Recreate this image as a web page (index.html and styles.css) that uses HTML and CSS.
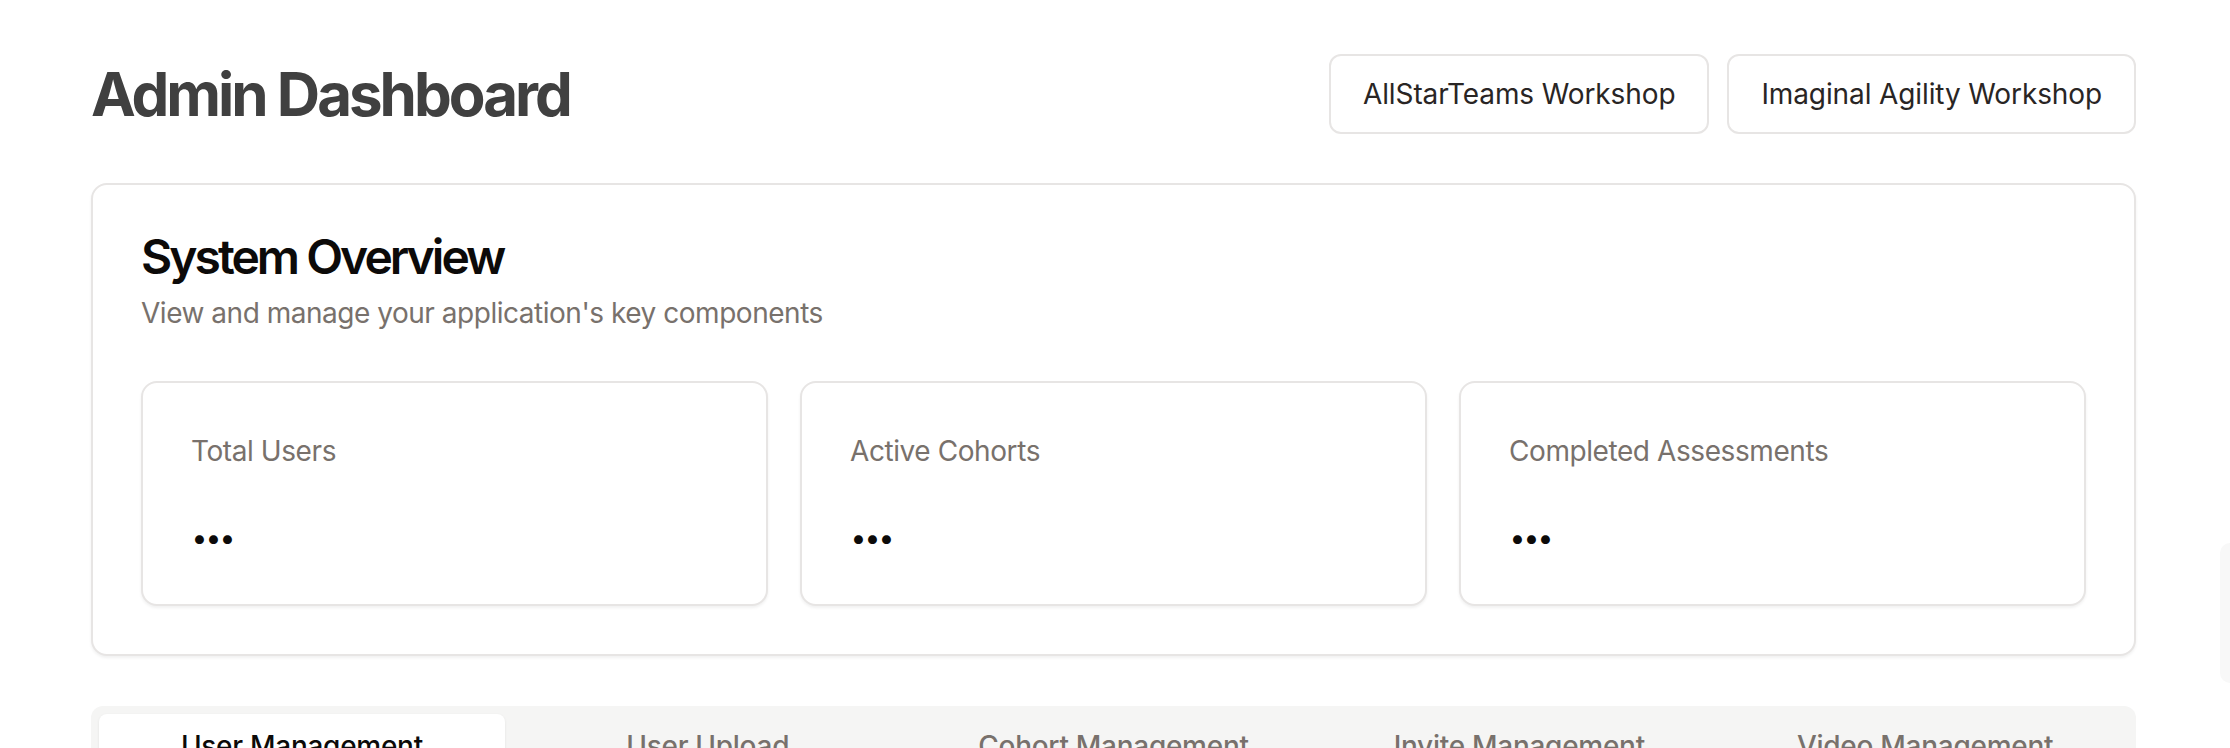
FILE: index.html
```html
<!DOCTYPE html>
<html lang="en">
<head>
<meta charset="utf-8">
<title>Admin Dashboard</title>
<link rel="stylesheet" href="styles.css">
</head>
<body>
<div class="page">
  <header class="top">
    <h1 class="page-title">Admin Dashboard</h1>
    <div class="actions">
      <button class="btn">AllStarTeams Workshop</button>
      <button class="btn">Imaginal Agility Workshop</button>
    </div>
  </header>

  <section class="card overview">
    <div class="card-head">
      <h2 class="card-title">System Overview</h2>
      <p class="card-desc">View and manage your application's key components</p>
    </div>
    <div class="stats">
      <div class="stat">
        <div class="stat-label">Total Users</div>
        <div class="stat-value">...</div>
      </div>
      <div class="stat">
        <div class="stat-label">Active Cohorts</div>
        <div class="stat-value">...</div>
      </div>
      <div class="stat">
        <div class="stat-label">Completed Assessments</div>
        <div class="stat-value">...</div>
      </div>
    </div>
  </section>

  <nav class="tabs">
    <button class="tab active">User Management</button>
    <button class="tab">User Upload</button>
    <button class="tab">Cohort Management</button>
    <button class="tab">Invite Management</button>
    <button class="tab">Video Management</button>
  </nav>
</div>
<div class="scroll-ghost"></div>
</body>
</html>
```

FILE: styles.css
```css
* { box-sizing: border-box; }

html, body {
  margin: 0;
  background: #ffffff;
  font-family: Inter, "Noto Sans", "Liberation Sans", sans-serif;
  color: #0c0a09;
  overflow: hidden;
}

.page {
  padding: 54px 94px 0 91px;
}

.top {
  display: flex;
  align-items: center;
  justify-content: space-between;
  height: 80px;
  margin-bottom: 49px;
}

.page-title {
  margin: 0;
  font-size: 60px;
  line-height: 72px;
  font-weight: 700;
  letter-spacing: -0.05em;
  color: #404040;
}

.actions {
  display: flex;
  gap: 18px;
}

.btn {
  height: 80px;
  padding: 0 32px;
  border: 2px solid #e7e5e4;
  border-radius: 12px;
  background: #ffffff;
  font-family: inherit;
  font-size: 28px;
  font-weight: 400;
  letter-spacing: -0.004em;
  color: #292524;
}

.card {
  border: 2px solid #e7e5e4;
  border-radius: 16px;
  background: #ffffff;
  box-shadow: 0 2px 3px rgba(0, 0, 0, 0.06);
}

.overview {
  padding: 48px;
}

.card-title {
  margin: 0;
  font-size: 48px;
  line-height: 48px;
  font-weight: 600;
  letter-spacing: -0.062em;
  color: #0c0a09;
}

.card-desc {
  margin: 12px 0 0;
  font-size: 28px;
  line-height: 40px;
  letter-spacing: -0.017em;
  color: #78716c;
}

.stats {
  margin-top: 48px;
  display: grid;
  grid-template-columns: repeat(3, 1fr);
  gap: 32px;
}

.stat {
  border: 2px solid #e7e5e4;
  border-radius: 16px;
  background: #ffffff;
  box-shadow: 0 2px 3px rgba(0, 0, 0, 0.06);
  padding: 48px;
}

.stat-label {
  font-size: 28px;
  line-height: 40px;
  letter-spacing: -0.015em;
  color: #78716c;
}

.stat-value {
  margin-top: 21px;
  font-size: 48px;
  line-height: 64px;
  font-weight: 800;
  letter-spacing: -0.06em;
  color: #0c0a09;
  transform: translateY(3px);
}

.tabs {
  margin-top: 50px;
  display: grid;
  grid-template-columns: repeat(5, 1fr);
  height: 80px;
  padding: 8px;
  border-radius: 12px;
  background: #f5f5f4;
}

.tab {
  border: 0;
  border-radius: 8px;
  background: transparent;
  font-family: inherit;
  font-size: 28px;
  font-weight: 500;
  letter-spacing: -0.01em;
  color: #78716c;
}

.tab.active {
  background: #ffffff;
  color: #0c0a09;
  box-shadow: 0 1px 3px rgba(0, 0, 0, 0.08);
}

.scroll-ghost {
  position: fixed;
  right: 0;
  top: 543px;
  width: 10px;
  height: 140px;
  border-radius: 10px 0 0 10px;
  background: #f8f8f8;
}
```
